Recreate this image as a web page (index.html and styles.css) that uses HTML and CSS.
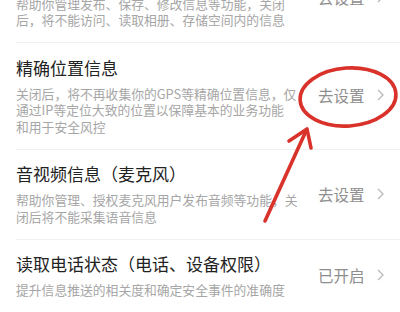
FILE: index.html
```html
<!DOCTYPE html>
<html lang="zh-CN">
<head>
<meta charset="utf-8">
<title>权限设置</title>
<link rel="stylesheet" href="styles.css">
</head>
<body>
<div class="list">
  <div class="item">
    <div class="info">
      <div class="title">存储权限</div>
      <div class="desc">帮助你管理发布、保存、修改信息等功能，关闭<br>后，将不能访问、读取相册、存储空间内的信息</div>
    </div>
    <div class="action"><span>去设置</span><svg class="chev" viewBox="0 0 7 12" width="7" height="12"><polyline points="1,1 6,6 1,11"/></svg></div>
  </div>
  <div class="item">
    <div class="info">
      <div class="title">精确位置信息</div>
      <div class="desc">关闭后，将不再收集你的GPS等精确位置信息，仅<br>通过IP等定位大致的位置以保障基本的业务功能<br>和用于安全风控</div>
    </div>
    <div class="action"><span>去设置</span><svg class="chev" viewBox="0 0 7 12" width="7" height="12"><polyline points="1,1 6,6 1,11"/></svg></div>
  </div>
  <div class="item">
    <div class="info">
      <div class="title">音视频信息（麦克风）</div>
      <div class="desc">帮助你管理、授权麦克风用户发布音频等功能，关<br>闭后将不能采集语音信息</div>
    </div>
    <div class="action"><span>去设置</span><svg class="chev" viewBox="0 0 7 12" width="7" height="12"><polyline points="1,1 6,6 1,11"/></svg></div>
  </div>
  <div class="item">
    <div class="info">
      <div class="title">读取电话状态（电话、设备权限）</div>
      <div class="desc">提升信息推送的相关度和确定安全事件的准确度</div>
    </div>
    <div class="action"><span>已开启</span><svg class="chev" viewBox="0 0 7 12" width="7" height="12"><polyline points="1,1 6,6 1,11"/></svg></div>
  </div>
</div>
<svg class="annotation" viewBox="0 0 400 312" width="400" height="312">
  <ellipse cx="348" cy="97" rx="48" ry="29" transform="rotate(-4 348 97)"/>
  <line x1="265" y1="221" x2="306" y2="131"/>
  <polyline points="289,141 307,129 311,148"/>
</svg>
</body>
</html>
```
FILE: styles.css
```css
html, body {
  margin: 0;
  padding: 0;
  background: #ffffff;
}
body {
  width: 400px;
  height: 312px;
  overflow: hidden;
  position: relative;
  font-family: "Noto Sans CJK SC", "Noto Sans", sans-serif;
}
.list {
  margin-top: -47px;
}
.item {
  display: flex;
  align-items: center;
  margin-left: 16px;
  padding: 12.5px 16px 13.5px 0;
  border-bottom: 1px solid #f0f0f0;
}
.info {
  width: 302px;
  flex: none;
}
.title {
  font-size: 17px;
  line-height: 24px;
  color: #222222;
  white-space: nowrap;
}
.desc {
  margin-top: 6px;
  font-size: 12.8px;
  line-height: 16.5px;
  color: #a6a6a6;
  white-space: nowrap;
}
.action {
  display: flex;
  align-items: center;
  gap: 12px;
  font-size: 15.5px;
  color: #8e8e8e;
}
.chev polyline {
  fill: none;
  stroke: #b8b8b8;
  stroke-width: 1.3;
}
.annotation {
  position: absolute;
  left: 0;
  top: 0;
  pointer-events: none;
}
.annotation ellipse,
.annotation line,
.annotation polyline {
  fill: none;
  stroke: #d9322b;
  stroke-width: 3.6;
  stroke-linecap: round;
  stroke-linejoin: round;
}
```
